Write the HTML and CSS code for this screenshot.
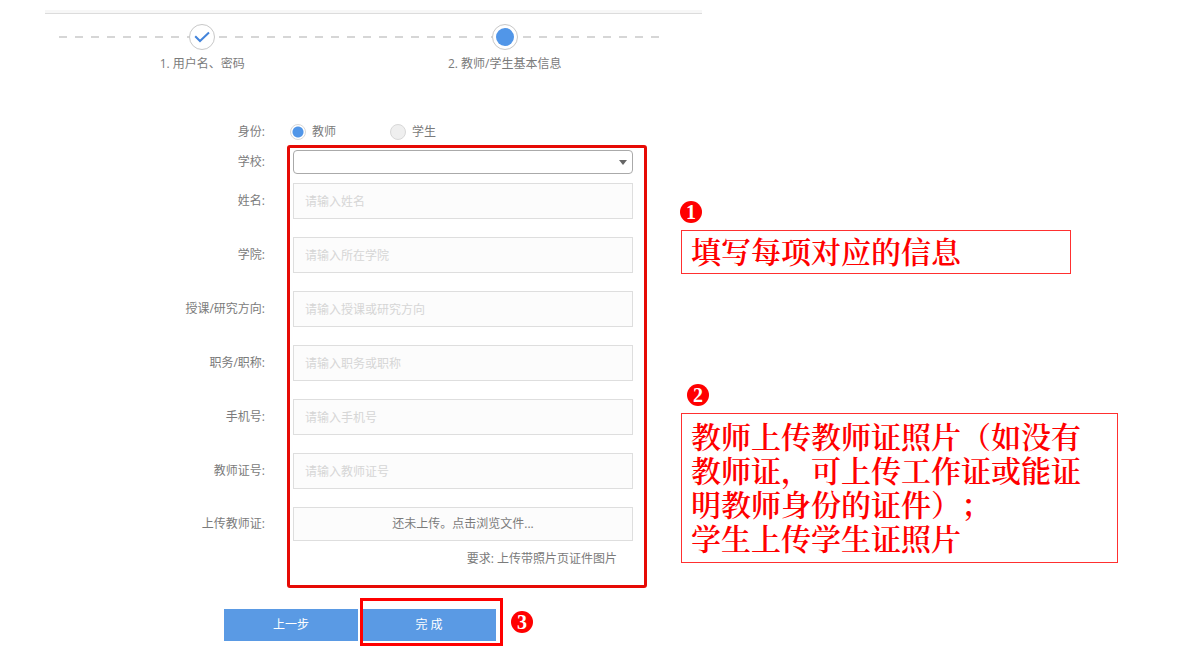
FILE: index.html
```html
<!DOCTYPE html>
<html lang="zh-CN">
<head>
<meta charset="utf-8">
<title>教师/学生基本信息</title>
<link rel="stylesheet" href="styles.css">
</head>
<body>
<header class="top">
  <ol class="steps">
    <li class="step">
      <span class="step-dot"><svg class="tick" viewBox="0 0 16 12" aria-hidden="true"><path d="M1.2 5.2 6 10 15 1.5"/></svg></span>
      <span>1. 用户名、密码</span>
    </li>
    <li class="step">
      <span class="step-dot current"></span>
      <span>2. 教师/学生基本信息</span>
    </li>
  </ol>
</header>
<main class="content">
  <form class="form">
    <div class="row identity">
      <span class="label" id="identity">身份:</span>
      <div class="radios" role="radiogroup" aria-labelledby="identity">
        <label class="radio"><input type="radio" name="identity" checked>教师</label>
        <label class="radio"><input type="radio" name="identity">学生</label>
      </div>
    </div>
    <div class="details">
      <div class="row school">
        <label class="label" for="school">学校:</label>
        <div class="select-wrap"><select id="school"><option></option></select></div>
      </div>
      <div class="row"><label class="label" for="name">姓名:</label><input class="text" id="name" type="text" placeholder="请输入姓名"></div>
      <div class="row"><label class="label" for="college">学院:</label><input class="text" id="college" type="text" placeholder="请输入所在学院"></div>
      <div class="row"><label class="label" for="field">授课/研究方向:</label><input class="text" id="field" type="text" placeholder="请输入授课或研究方向"></div>
      <div class="row"><label class="label" for="title">职务/职称:</label><input class="text" id="title" type="text" placeholder="请输入职务或职称"></div>
      <div class="row"><label class="label" for="phone">手机号:</label><input class="text" id="phone" type="tel" placeholder="请输入手机号"></div>
      <div class="row"><label class="label" for="cert">教师证号:</label><input class="text" id="cert" type="text" placeholder="请输入教师证号"></div>
      <div class="row upload-row"><label class="label" for="upload">上传教师证:</label><button class="upload" id="upload" type="button">还未上传。点击浏览文件...</button></div>
      <p class="hint">要求: 上传带照片页证件图片</p>
    </div>
    <div class="actions">
      <button class="btn" type="button">上一步</button>
      <div class="finish"><button class="btn" type="submit">完 成</button></div>
      <span class="badge">3</span>
    </div>
  </form>
  <aside class="notes">
    <section class="note first">
      <span class="badge">1</span>
      <div class="note-text short">填写每项对应的信息</div>
    </section>
    <section class="note second">
      <span class="badge">2</span>
      <div class="note-text">
        <p>教师上传教师证照片（如没有教师证，可上传工作证或能证明教师身份的证件）；</p>
        <p>学生上传学生证照片</p>
      </div>
    </section>
  </aside>
</main>
</body>
</html>
```
FILE: styles.css
```css
*, *::before, *::after { box-sizing: border-box; }

body {
  margin: 0;
  background: #fff;
  color: #7b7b7b;
  font: 12px/18px "Open Sans", "Noto Sans CJK SC", sans-serif;
}

button, input, select { font: inherit; }
p, ol { margin: 0; padding: 0; }

/* Step indicator */
.top {
  width: 54.75%;
  margin: 10px 0 0 45px;
  border-top: 3px solid #f7f7f7;
}

.steps {
  position: relative;
  display: grid;
  grid-template-columns: 1fr 1fr;
  padding: 10px 46px 0 6px;
  border-top: 1px solid #dcdcdc;
  list-style: none;
}

.steps::before {
  content: "";
  position: absolute;
  top: 22px;
  left: 14px;
  right: 37px;
  height: 2px;
  background: repeating-linear-gradient(90deg, #d6d6d6 0 8px, transparent 8px 16px);
}

.step {
  position: relative;
  display: flex;
  flex-direction: column;
  align-items: center;
  gap: 5px;
}

.step-dot {
  display: grid;
  place-items: center;
  width: 26px;
  height: 26px;
  border: 1px solid #c8c8c8;
  border-radius: 50%;
  background: #fff;
}

.current::before {
  content: "";
  width: 18px;
  height: 18px;
  border-radius: 50%;
  background: #5196e8;
}

.tick {
  width: 16px;
  height: 12px;
  fill: none;
  stroke: #4384db;
  stroke-width: 2;
}

/* Form and notes side by side */
.content {
  display: grid;
  grid-template-columns: 633fr 567fr;
  padding: 50px 0 9px;
}

.row {
  display: grid;
  grid-template-columns: 265fr 340fr;
  column-gap: 28px;
  align-items: center;
  margin-bottom: 18px;
}

.label { text-align: right; }

.identity { margin-bottom: 9px; }

.radios {
  display: grid;
  grid-template-columns: 100px 1fr;
}

.radio {
  display: flex;
  align-items: center;
  gap: 6px;
}

.radio input {
  appearance: none;
  width: 16px;
  height: 16px;
  margin: 0 0 0 -3px;
  border: 1px solid #d8d8d8;
  border-radius: 50%;
  background: #efefef;
}

.radio input:checked {
  background: radial-gradient(circle, #5196e8 5px, #fff 6px);
}

.details { position: relative; }

.details::after {
  content: "";
  position: absolute;
  top: -5px;
  right: -14px;
  bottom: 0;
  width: 360px;
  border: 3px solid #e60a05;
  border-radius: 3px;
  pointer-events: none;
}

.school { margin-bottom: 9px; }

.select-wrap {
  position: relative;
  display: flex;
}

.select-wrap::after {
  content: "";
  position: absolute;
  top: 10px;
  right: 6px;
  border: 4px solid transparent;
  border-top: 5px solid #666;
  border-bottom: 0;
  pointer-events: none;
}

select {
  appearance: none;
  width: 100%;
  height: 24px;
  border: 1px solid #aaa;
  border-radius: 4px;
  background: #fff;
}

.text, .upload {
  width: 100%;
  height: 36px;
  padding: 0 11px;
  border: 1px solid #dedede;
  border-radius: 0;
  background: #fcfcfc;
  color: #7b7b7b;
}

.text::placeholder { color: #d6d6d6; }

.upload-row { margin-bottom: 9px; }
.upload { height: 34px; }

.hint {
  padding: 0 16px 20px 0;
  text-align: right;
}

.actions {
  display: flex;
  gap: 4px;
  justify-content: flex-end;
  padding: 21px 100px 0 0;
}

.btn {
  width: 134px;
  height: 32px;
  padding: 0;
  border: 0;
  background: #5a9ae4;
  color: #fff;
}

.finish {
  position: relative;
  display: flex;
}

.finish::after {
  content: "";
  position: absolute;
  inset: -11px -7px -5px -2px;
  border: 3px solid red;
  pointer-events: none;
}

/* Numbered notes */
.badge {
  display: grid;
  place-items: center;
  width: 22px;
  height: 22px;
  border-radius: 50%;
  background: red;
  color: #fff;
  font: bold 20px/22px "Liberation Serif", serif;
}

.actions .badge { margin: 2px 0 0 11px; }

.notes {
  padding: 78px 82px 0 47px;
  color: red;
}

.note {
  display: flex;
  flex-direction: column;
  gap: 7px;
}

.second { margin-top: 110px; }
.second .badge { margin-left: 7px; }

.note-text {
  padding: 4px 9px 8px;
  margin-left: 1px;
  border: 1px solid #ff3030;
  font: 600 30px/34px "Noto Serif CJK SC", "Noto Sans CJK SC", serif;
  text-spacing-trim: space-all;
}

.short {
  width: 390px;
  max-width: 100%;
  padding: 2px 9px 6px;
}
```
